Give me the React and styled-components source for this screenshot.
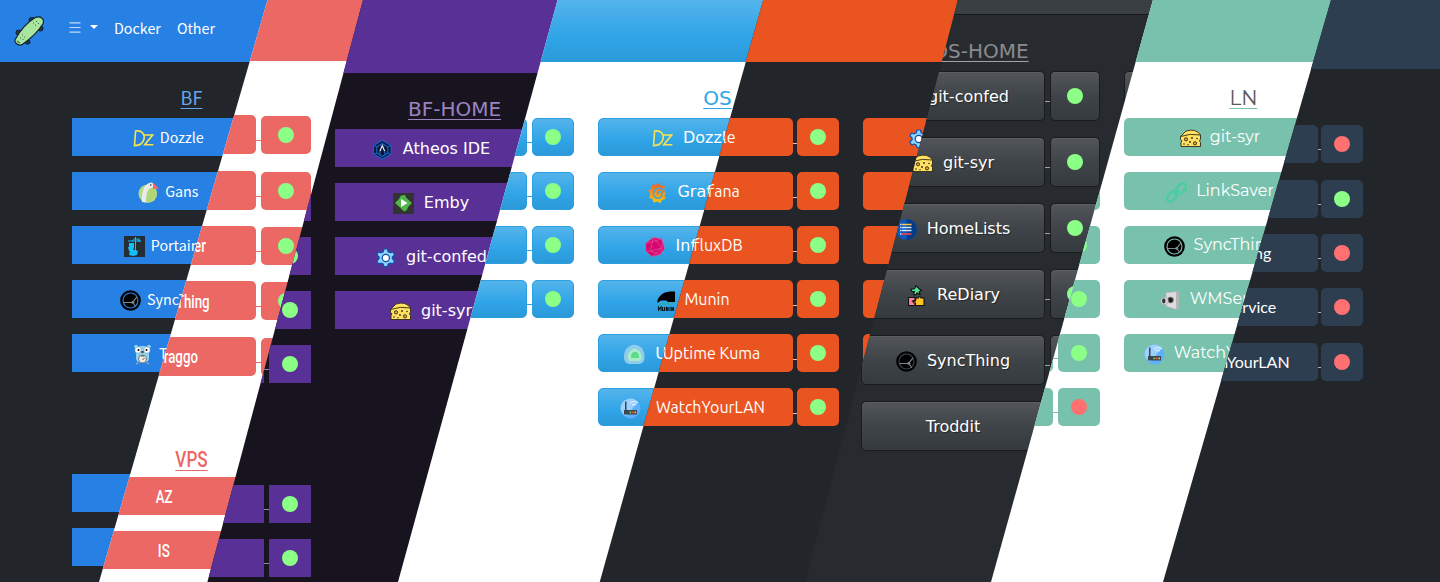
import React from "react";
import styled, { createGlobalStyle, ThemeProvider, css } from "styled-components";

const Global = createGlobalStyle`
  * { box-sizing: border-box; }
  body { margin: 0; background: #222529; overflow: hidden; }
`;

/* ---------- themes ---------- */
const dejavu = '"DejaVu Sans", sans-serif';
const base = {
  start: 72, headerBorder: "none", buttonWidth: 192, linkWidth: 5, statusWidth: 42,
  height: 38, statusHeight: 38, pitch: 54, radius: 0, linkTop: 24, border: "0",
  shadow: "none", spacing: "0", weight: 400, gap: 10, size: 16, titleSize: 20,
  titleWeight: 400, text: "#fff", drop: 0, titleRise: 0, condense: 1, boxShadow: "none",
};
const themes = {
  cosmo: { ...base, header: "#2780e3", headerHeight: 62, bg: "#222529", top: 118, button: "#2780e3", buttonWidth: 195,
    font: '"Noto Sans CJK SC", sans-serif', size: 14.3, gap: 6, titleSize: 18, titleRise: 1, title: "#68a6eb", line: "#68a6eb" },
  journal: { ...base, header: "#eb6864", headerHeight: 61, bg: "#fff", top: 115.4, button: "#eb6864",
    font: 'Roboto, sans-serif', weight: 500, size: 17.5, titleSize: 22.5, condense: 0.76, drop: 2, titleRise: -1.5,
    titleWeight: 500, buttonWidth: 184, statusWidth: 50, height: 39, pitch: 55.3, radius: 5, gap: 8,
    linkTop: 25, title: "#eb6864", line: "#eb6864" },
  pulse: { ...base, header: "#593196", headerHeight: 73, bg: "#17141f", top: 129, button: "#593196", drop: 2,
    font: dejavu, title: "#9b83c0", line: "#9b83c0" },
  cerulean: { ...base, header: "linear-gradient(#54b4eb, #2fa4e7 60%, #2b9ad9)", headerHeight: 62, bg: "#fff", top: 118,
    button: "linear-gradient(#54b4eb, #2fa4e7 60%, #2b99d8)", border: "1px solid #2c9fe1", radius: 5, drop: 2,
    font: dejavu, shadow: "0 1px 0 rgba(0,0,0,.07)", title: "#2fa4e7", line: "#2fa4e7" },
  united: { ...base, start: 74, header: "#e95420", headerHeight: 62, bg: "#222529", top: 118, button: "#e95420",
    buttonWidth: 193, linkWidth: 4, radius: 5, linkTop: 25, font: 'Ubuntu, "Noto Sans", sans-serif', gap: 9,
    title: "#f19879", line: "#f6b9a4" },
  slate: { ...base, header: "#3a3f44", headerHeight: 15, headerBorder: "1px solid #151719", bg: "#272b30", top: 71,
    button: "linear-gradient(#52565b, #3f4448 50%, #353a3e)", border: "1px solid #191b1e", radius: 5, buttonWidth: 184,
    statusWidth: 50, height: 50, statusHeight: 50, pitch: 66, linkTop: 30, font: dejavu, drop: 2,
    boxShadow: "inset 0 1px 0 rgba(255,255,255,.06)",
    shadow: "1px 1px 1px rgba(0,0,0,.4)", title: "#898b8d", line: "#a0a2a4" },
  minty: { ...base, header: "#78c2ad", headerHeight: 62, bg: "#fff", top: 118, button: "#78c2ad", radius: 5, gap: 9,
    font: 'Montserrat, Inter, sans-serif', title: "#5a5a5a", line: "#78c2ad" },
  flatly: { ...base, header: "#2c3e50", headerHeight: 69, bg: "#222529", top: 125.2, button: "#2c3e50", radius: 5,
    buttonWidth: 194, linkWidth: 3, pitch: 54.35, gap: 9, font: "Lato, sans-serif", title: "#808b96", line: "#aab2b9" },
};

/* ---------- page parts ---------- */
const Stage = styled.main`
  display: grid;
  width: 1440px;
  height: 582px;
  overflow: hidden;
`;
const Slice = styled.section`
  grid-area: 1 / 1;
  min-width: 0;
  height: 582px;
  overflow: hidden;
  background: ${p => p.theme.bg};
  color: ${p => p.theme.text};
  font-family: ${p => p.theme.font};
  ${p => p.$from && css`clip-path: polygon(${p.$from[0]}px 0, 1440px 0, 1440px 582px, ${p.$from[1]}px 582px);`}
`;
const Header = styled.header`
  display: flex;
  align-items: center;
  height: ${p => p.theme.headerHeight}px;
  padding: 0 14px;
  background: ${p => p.theme.header};
  border-bottom: ${p => p.theme.headerBorder};
`;
const Menu = styled.nav`
  display: flex;
  align-items: center;
  margin-left: 25px;
  padding-bottom: 7px;
`;
const MenuLink = styled.span`
  margin-left: 16px;
  font-size: 14.3px;
  line-height: 20px;
`;
const Caret = styled.i`
  margin: 0 0 1px 9px;
  border: 4px solid transparent;
  border-top-color: #fff;
  border-bottom: 0;
`;
const Columns = styled.div`
  display: grid;
  grid-template-columns: repeat(5, 239px);
  column-gap: 24px;
  padding: ${p => p.theme.top - p.theme.headerHeight - 32}px 0 0 ${p => p.theme.start}px;
`;
const Column = styled.div`
  grid-column: ${p => p.$at};
  grid-row: 1;
`;
const Group = styled.div`
  display: flow-root;
  & + & { margin-top: 53.6px; }
`;
const Title = styled.h2`
  height: 24px;
  margin: ${p => -p.theme.titleRise}px 0 ${p => 8 + p.theme.titleRise}px;
  text-align: center;
  font-size: ${p => p.theme.titleSize}px;
  line-height: 24px;
  font-weight: ${p => p.theme.titleWeight};
  color: ${p => p.theme.title};
  text-decoration: underline 1px ${p => p.theme.line};
  text-underline-offset: 3px;
  white-space: nowrap;
  transform: ${p => (p.theme.condense === 1 ? "none" : `scaleX(${p.theme.condense})`)};
`;
const Row = styled.div`
  display: flex;
  height: ${p => (p.$plain ? 54 : p.theme.pitch)}px;
`;
const surface = css`
  display: flex;
  align-items: center;
  justify-content: center;
  background: ${p => p.theme.button};
  border: ${p => p.theme.border};
  border-radius: ${p => (p.$plain ? 0 : p.theme.radius)}px;
  box-shadow: ${p => p.theme.boxShadow};
`;
const AppButton = styled.div`
  ${surface}
  gap: ${p => p.theme.gap}px;
  width: ${p => p.theme.buttonWidth}px;
  height: ${p => (p.$plain ? 38 : p.theme.height)}px;
`;
const Label = styled.span`
  margin-top: ${p => p.theme.drop}px;
  padding-right: ${p => p.$trail || 0}px;
  font-size: ${p => p.theme.size}px;
  line-height: 24px;
  font-weight: ${p => p.theme.weight};
  letter-spacing: ${p => p.theme.spacing};
  text-shadow: ${p => p.theme.shadow};
  white-space: nowrap;
  transform: ${p => (p.theme.condense === 1 ? "none" : `scaleX(${p.theme.condense})`)};
`;
const Link = styled.div`
  width: ${p => p.theme.linkWidth}px;
  height: 1px;
  margin-top: ${p => p.theme.linkTop}px;
  background: ${p => p.theme.line};
`;
const Status = styled.div`
  ${surface}
  width: ${p => p.theme.statusWidth}px;
  height: ${p => p.theme.statusHeight}px;
  margin-top: ${p => p.theme.height - p.theme.statusHeight}px;
`;
const Dot = styled.i`
  width: 16px;
  height: 16px;
  border-radius: 50%;
  background: ${p => (p.$down ? "#ff7070" : "#8cff87")};
`;
const Icon = styled.svg`
  flex: none;
  width: 21px;
  height: 21px;
  margin-top: 3px;
`;

/* ---------- icons, each on a 21 x 21 grid ---------- */
const icons = {
  dozzle: <g fill="none" stroke="#f7e34f" strokeWidth="1.6"><path d="M2.600 3C9 2 12 6 11 11c-.8 4-4 6.500-9.500 6.600z" /><path d="M10.500 7h9.200l-8 9.700h8.700" /></g>,
  gans: <g><circle cx="9.800" cy="11.700" r="9.300" fill="#b5db80" /><path d="M4 20C3 10 7 0 14 .5l3 3.500-3 1.500c-5 3-5 9-6 15z" fill="#e9ebed" /><path d="M10 8c-2 5-2 8-1 12l4-1c6-4 5-9 3-12-2-1-4-1-6 1z" fill="#b0d676" /><path d="M15 .5l6 6-6 .5z" fill="#ff6469" /><circle cx="12.800" cy="3" r=".8" fill="#222" /></g>,
  portainer: <g><path fill="#252d34" d="M0 0h21v21H0z" /><path d="M4 5h13M11.500 1v14M8 5l3.500-3 4 3M15 2v4" stroke="#13bef9" strokeWidth="1" fill="none" /><path d="M5 7h5v5H5zM4 11h6l-1 4H5zM6 14h5l3 1-1 4-4 1-4-1z" fill="#13bef9" /></g>,
  sync: <g fill="none"><circle cx="10.500" cy="10.500" r="9.200" stroke="#000" strokeWidth="2.300" /><circle cx="10.500" cy="10.500" r="6.900" fill="#000" /><path d="M3.500 12.500l9.300-.3 4-5M12.800 12.200l3 4.500" stroke="#7d878f" strokeWidth="1.100" /><circle cx="12.800" cy="12.200" r="1.500" fill="#7d878f" /></g>,
  traggo: <g><rect x="4" y="2" width="13" height="17" rx="5" fill="#8ed6f4" /><circle cx="4" cy="2.500" r="1.800" fill="#8ed6f4" /><circle cx="17" cy="2.500" r="1.800" fill="#8ed6f4" /><circle cx="6" cy="6" r="3.200" fill="#fff" stroke="#577" strokeWidth=".4" /><circle cx="15" cy="6" r="3.200" fill="#fff" stroke="#577" strokeWidth=".4" /><circle cx="6.500" cy="6" r="1" /><circle cx="14.500" cy="6" r="1" /><ellipse cx="10.500" cy="8" rx="1.300" ry=".9" fill="#333" /><circle cx="10.500" cy="15" r="4" fill="#f0ece2" stroke="#777" /><path d="M9 12h3M10.500 16l2-2" stroke="#555" /><path d="M4 20l2-1M17 20l-2-1" stroke="#d9b9a5" /></g>,
  atheos: <g fill="#0a1738" stroke="#1461c8" strokeWidth="1.200"><path d="M10.300 1.500l8.800 5V15l-8.800 5-8.800-5V6.500z" /><path d="M10.300 4.500l5.500 3.500v6l-5.500 3.500L4.800 14V8zM1.800 6.500l3 1.500M18.800 6.500l-3 1.500M1.800 15l3-1M18.800 15l-3-1M7.800 15.500v-4M12.800 15.500v-4" /><path d="M8 12l2.300-5.500 2.300 5.500" stroke="#e6eef8" fill="none" /></g>,
  emby: <g><path fill="#333" d="M0 0h21v21H0z" /><path d="M8 2.500l4-.5 1.500 3 5.500 5-4 4-1 3-3 1.500-4-4L2 10l4-4z" fill="#52b54b" /><path d="M8 6l6.500 4L8 14z" fill="#fff" /></g>,
  gear: <g strokeLinejoin="round" transform="translate(1.500 -1)"><path d="M7.500 3h3.400l.8 3 2.300.8 2.500-.8 1.500 3-2.200 2v1.800l2.200 2-1.500 3-2.800-.8-2 1-.8 2.700H7.500l-.8-2.700-2-1-2.800.8-1.500-3 2.200-2V11L.4 9l1.500-3 2.700.8 2.100-.8z" fill="#8fd3ff" stroke="#0b55b0" strokeWidth="1.200" /><circle cx="9.300" cy="12" r="3.600" fill="#fff" stroke="#0b4aa0" strokeWidth="1.200" /></g>,
  cheese: <g stroke="#302b18" strokeWidth=".9" fill="#ffe060"><path d="M.5 8.500L6 3Q16 0 20.500 7v4l-1 1.800 1 1.700v4H1v-4l1-1.700L.5 11.500z" /><path d="M.5 8.500Q10 5 20.500 7" fill="none" /><circle cx="6" cy="11.300" r="1.600" fill="#e2ab3a" /><circle cx="15" cy="15.300" r="1.600" fill="#e2ab3a" /><g fill="#302b18" stroke="none"><circle cx="12" cy="10" r=".9" /><circle cx="17" cy="10.500" r=".8" /><circle cx="10" cy="14" r=".9" /><circle cx="4" cy="16" r=".8" /><circle cx="8" cy="16.800" r=".7" /></g></g>,
  grafana: <g><defs><linearGradient id="sun" x2="0" y2="1"><stop stopColor="#f05a28" /><stop offset="1" stopColor="#fbca0a" /></linearGradient></defs><path d="M11 2.500l2.500-2 1 3 4.500.5-1 3.500 2 3-1.500 3 1 3.500-3.500 1-1.500 3-3.500-1.500-3.500 1-1-3.500-3.500-1.500 1.500-3.500L2 8.500 5.500 7l.5-4z" fill="url(#sun)" /><path d="M18 10.500C17 5.500 11 5 8.500 8.500c-3 4.500 1 8.500 4.500 7.500 4-1 3.500-6.500.5-6.500-2 0-2.500 2-1 3" stroke="#42a4de" strokeWidth="1.500" fill="none" /></g>,
  influx: <g fill="#d30971" stroke="#e8559f" strokeWidth=".6"><path d="M8 1.500l9 1.500 2.500 9.500-4 6-8.500 2-6-5-.5-8z" /><path d="M8 1.500L5.500 15 17 12zM17 3l0 9-10 8.500M.5 7.500L17 3M17 12l-1.500 6.500M5.500 15l10 3.500M1 15.500l4.500-.5" /></g>,
  munin: <g><path d="M3.500 10C6 4 11 1.500 18 1.500h3V12h-7l-1.500-1.500H7L3.500 13z" fill="#000" /><path d="M6 15l3-2 2 2 3-2 2 2 3-2" stroke="#27b768" strokeWidth=".9" fill="none" /><path d="M4.500 21v-4l1.300 2 1.300-2v4M8.500 17v3.500h2V17M12.300 21v-4l1.800 4v-4M16 17v4M17.700 21v-4l1.800 4v-4" stroke="#0b1c26" strokeWidth="1.100" fill="none" /></g>,
  kuma: <g><path d="M2 5Q10-3 18 4c4 7 4 16-4 16H7C-2 20-1 10 2 5z" fill="#8fcbea" /><path d="M5 8q6-7 11 0c3 6 2 9-2 9H7C3 17 3 12 5 8z" fill="#a8ecc9" /><path d="M7 13c0-7 8-7 8 0v1H7z" fill="#5cdd8b" /></g>,
  watch: <g><circle cx="10.500" cy="10.500" r="10" fill="#5cb0ff" /><path d="M.5 10A10 10 0 0118 4L6 18A10 10 0 01.5 10z" fill="#9bd0ff" /><path d="M10 5q4-3 8 0M12 7q2-1.500 4 0" stroke="#e3f3ff" strokeWidth="1.100" fill="none" /><path d="M5 3.500h1.500V12H17v4.500H4V12h1z" fill="#3c474e" /><path d="M9.500 13.500h1.800v1.800H9.500z" fill="#62d86b" /><path d="M12 13.500h1.800v1.800H12z" fill="#ff4d4d" /><path d="M14.500 13.500h1.500v1.800h-1.500z" fill="#ffc83e" /></g>,
  lists: <g><circle cx="10.500" cy="10.500" r="10.500" fill="#0758bf" /><path d="M10.500 0a10.500 10.500 0 010 21z" fill="#063b87" /><path d="M6 5.500h9.500" stroke="#ffc855" strokeWidth="1.300" /><path d="M4 5.500h1.500M4 8.500h1.500M4 11.500h1.500M4 15h1.500M6 8.500h9.500M6 11.500h9.500" stroke="#d4e5ff" strokeWidth="1.300" /><path d="M6 15h9.500" stroke="#ff4752" strokeWidth="1.300" /></g>,
  puzzle: <g stroke="#111" strokeWidth="1.100"><path d="M10 .8l5.200 4.700-2 1.200.8 2.800-3-1.500-1.500 2-2-.8 1-2.500-3-.5-.5-2 3.500-.5z" fill="#4de697" /><path d="M2.500 12.500H9v2.500l-2.500 1L9 17.500V20.500H2.500z" fill="#ff7fa0" /><path d="M10 13h2.500q1-3 2.500 0H18v7.500h-8.500v-2.500H8q-2-2 1.500-2z" fill="#ffc328" /></g>,
  chain: <g fill="none" stroke="#46ce9f" strokeWidth="2.200"><rect x="9" y="3" width="12" height="7" rx="3.500" transform="rotate(-45 15 6.500)" /><rect x="0" y="11" width="12" height="7" rx="3.500" transform="rotate(-45 6 14.500)" /><path d="M8 13l5-5" /></g>,
  speaker: <g><path d="M6 2.500l12.500-1v17l-3 .8-9.500-3z" fill="#dcdcdc" stroke="#b0b0b0" strokeWidth=".8" /><path d="M16 1.700h2.500v16.800l-2.500.8z" fill="#b5b5b5" /><circle cx="10.500" cy="10" r="3" fill="#222" stroke="#999" strokeWidth=".8" /><ellipse cx="4.500" cy="11" rx="3.800" ry="3.600" fill="#d6d9d9" stroke="#a5a5a5" strokeWidth=".6" /><ellipse cx="3.800" cy="11" rx="1.700" ry="2.400" fill="#333" /></g>,
};

function Skateboard() {
  return (
    <svg width="30" height="30" viewBox="0 0 30 30">
      <g fill="#26384c" stroke="#10202c">
        <rect x="15" y="1.500" width="6" height="5" rx="2.500" /><rect x="24" y="10" width="5" height="5" rx="2.500" />
        <rect x="2" y="14" width="5" height="5" rx="2.500" /><rect x="11" y="24" width="5" height="4" rx="2" />
      </g>
      <path d="M1.500 23C7 13 14 6 21 1.800c5-2.300 10 .7 8 6C24 16 16 23 9 28c-3 3-10-1-7.500-5z" fill="#a8e6a0" stroke="#15202a" strokeWidth="1.200" />
      <path d="M19 7h1M22 5.500h1M21 9h1M24 7.500h1M8 19h1M10 21h1M6 22h1M8.500 23.500h1M3 25l3 2" stroke="#42684a" strokeWidth="1.200" />
    </svg>
  );
}
function Bars() {
  return <svg width="12" height="11" viewBox="0 0 12 11"><path d="M.5 .8h11M.5 5.500h11M.5 10.200h11" stroke="#c2dcf8" strokeWidth="1.200" /></svg>;
}

/* ---------- data: [label, icon, down, trailing space] ---------- */
const blank = n => Array.from({ length: n }, () => []);
const slices = [
  { theme: "cosmo", columns: [{ at: 1, groups: [
    { title: "BF", items: [["Dozzle", "dozzle"], ["Gans", "gans"], ["Portainer", "portainer"], ["SyncThing", "sync"], ["Traggo", "traggo"]] },
    { items: blank(2) }] }] },
  { theme: "journal", from: [267.5, 99], columns: [{ at: 1, groups: [
    { items: [[], [], ["Portainer", "portainer"], ["SyncThing", "sync"], ["Traggo", "traggo", false, 4]] },
    { title: "VPS", plain: true, items: [["AZ"], ["IS"]] }] }] },
  { theme: "pulse", from: [363, 207.4], columns: [
    { at: 1, groups: [{ items: blank(5) }, { items: blank(2) }] },
    { at: 2, groups: [{ title: "BF-HOME", items: [["Atheos IDE", "atheos"], ["Emby", "emby"], ["git-confed", "gear"], ["git-syr", "cheese"]] }] }] },
  { theme: "cerulean", from: [557.6, 398], columns: [
    { at: 2, groups: [{ items: blank(4) }] },
    { at: 3, groups: [{ title: "OS", items: [["Dozzle", "dozzle"], ["Grafana", "grafana"], ["InfluxDB", "influx"], ["Munin", "munin"], ["Uptime Kuma", "kuma"], ["WatchYourLAN", "watch"]] }] }] },
  { theme: "united", from: [763.2, 599.7], columns: [
    { at: 3, groups: [{ items: [["Dozzle", "dozzle"], ["Grafana", "grafana"], ["InfluxDB", "influx"], ["Munin", "munin", false, 9], ["Uptime Kuma", "kuma"], ["WatchYourLAN", "watch", false, 2]] }] },
    { at: 4, groups: [{ items: [["git-confed", "gear"], [], [], [], []] }] }] },
  { theme: "slate", from: [957.9, 805], columns: [
    { at: 4, groups: [{ title: "OS-HOME", items: [["git-confed", "gear"], ["git-syr", "cheese"], ["HomeLists", "lists"], ["ReDiary", "puzzle"], ["SyncThing", "sync"], ["Troddit"]] }] },
    { at: 5, groups: [{ items: blank(1) }] }] },
  { theme: "minty", from: [1152.9, 991], columns: [
    { at: 4, groups: [{ items: [[], [], [], [], [], [null, null, true]] }] },
    { at: 5, groups: [{ title: "LN", items: [["git-syr", "cheese"], ["LinkSaver", "chain"], ["SyncThing", "sync"], ["WMService", "speaker"], ["WatchYourLAN", "watch"]] }] }] },
  { theme: "flatly", from: [1331, 1163], columns: [
    { at: 5, groups: [{ items: [[null, null, true], [], ["SyncThing", "sync", true], ["WMService", "speaker", true, 2], ["WatchYourLAN", "watch", true]] }] }] },
];

function AppRow({ item: [label, icon, down, trail], plain }) {
  return (
    <Row $plain={plain}>
      <AppButton $plain={plain}>
        {icon && <Icon viewBox="0 0 21 21">{icons[icon]}</Icon>}
        {label && <Label $trail={trail}>{label}</Label>}
      </AppButton>
      {!plain && <><Link /><Status><Dot $down={down} /></Status></>}
    </Row>
  );
}

export default function App() {
  return (
    <Stage>
      <Global />
      {slices.map(slice => (
        <ThemeProvider key={slice.theme} theme={themes[slice.theme]}>
          <Slice $from={slice.from}>
            <Header>
              {slice.theme === "cosmo" && (
                <>
                  <Skateboard />
                  <Menu><Bars /><Caret /><MenuLink>Docker</MenuLink><MenuLink>Other</MenuLink></Menu>
                </>
              )}
            </Header>
            <Columns>
              {slice.columns.map(column => (
                <Column key={column.at} $at={column.at}>
                  {column.groups.map((group, g) => (
                    <Group key={g}>
                      <Title>{group.title}</Title>
                      {group.items.map((item, i) => <AppRow key={i} item={item} plain={group.plain} />)}
                    </Group>
                  ))}
                </Column>
              ))}
            </Columns>
          </Slice>
        </ThemeProvider>
      ))}
    </Stage>
  );
}
